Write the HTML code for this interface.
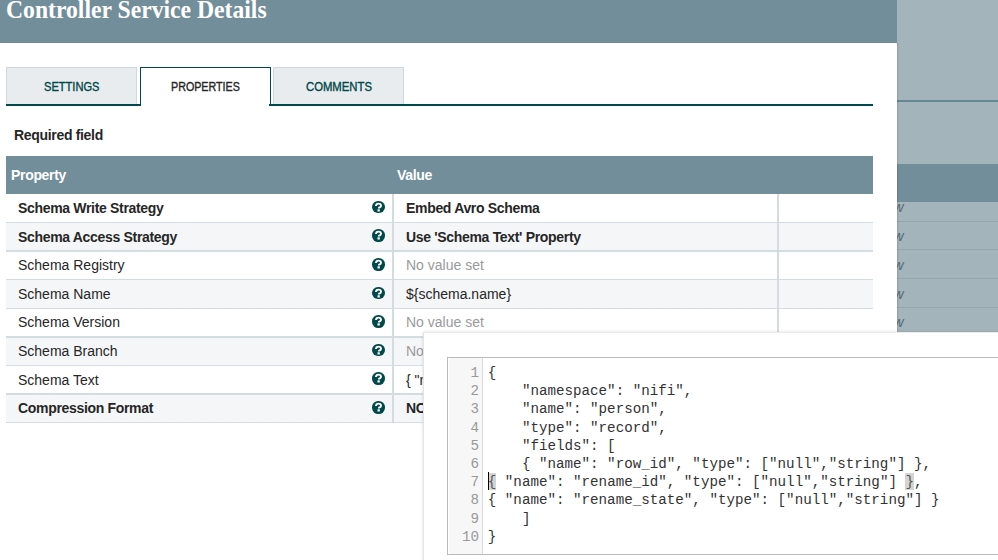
<!DOCTYPE html>
<html><head><meta charset="utf-8">
<style>
*{margin:0;padding:0;box-sizing:border-box}
html,body{width:998px;height:560px;overflow:hidden;background:#fff;font-family:"Liberation Sans",sans-serif}
.a{position:absolute}
.nw{white-space:nowrap}
#bgR{left:897px;top:0;width:101px;height:560px;background:#a3b4bb}
#bgline1{left:897px;top:100px;width:101px;height:1.5px;background:#648892}
#bgHead{left:897px;top:164px;width:101px;height:37.5px;background:#728e9b}
.bgrow{left:897px;width:101px;height:1.2px;background:#92a6ae}
.bgw{left:893.5px;font-size:14px;font-style:italic;color:#56676e;line-height:14px}
#hdr{left:0;top:0;width:897px;height:43px;background:#728e9b}
#modal{left:0;top:43px;width:897px;height:517px;background:#fff;box-shadow:1px 0 1.5px rgba(0,0,0,0.12)}
#title{left:6px;top:-5px;transform:scaleX(0.91);transform-origin:0 0;font-family:"Liberation Serif",serif;font-weight:bold;font-size:26px;line-height:30px;color:#fff}
.tab{top:67px;height:38px;background:#e8ecee;border:1px solid #cfd8dc;border-bottom:none}
.tab.sel{background:#fff;border:1.5px solid #004849;border-bottom:none}
.tt{top:81.9px;font-size:12px;line-height:10px;color:#004849;transform-origin:0 0;-webkit-text-stroke:0.35px currentColor}
#tabline{left:6px;top:104.4px;width:867px;height:1.4px;background:#004849}
.b{font-weight:bold;letter-spacing:-0.32px}
#req{left:14px;top:127px;font-size:14px;line-height:16px;color:#262626}
#thead{left:6px;top:156px;width:867px;height:38px;background:#728e9b}
.ht{top:167px;font-size:14px;line-height:16px;color:#fff}
.row{left:6px;width:867px;height:28.6px}
.row.alt{background:#f4f6f7}
.rl{left:6px;width:867px;height:1.5px;background:#d3dde1}
.vl{top:194px;width:1.6px;height:229px;background:#d3dde1}
.pt{left:18px;font-size:14px;line-height:16px;color:#262626}
.vt{left:406px;font-size:14px;line-height:16px;color:#262626}
.gray{color:#9a9a9a}
.hi{left:372px;width:12.6px;height:12.6px;border-radius:50%;background:#004849}
.hi svg{position:absolute;left:0;top:0}
#pop{left:423px;top:332px;width:600px;height:260px;background:#fff;box-shadow:0 0 3px rgba(0,0,0,0.14);border-left:1px solid #e4e4e4;border-top:1px solid #ececec}
#ed{left:447px;top:356.5px;width:600px;height:198.5px;border:1.5px solid #bababa;background:#fff}
#gut{left:448.5px;top:358px;width:34px;height:195.5px;background:#f7f7f7;border-right:1px solid #dddddd}
.code{font-family:"Liberation Mono",monospace;font-size:14.21px;line-height:18.2px;white-space:pre}
#nums{left:449px;top:364px;width:30px;text-align:right;color:#999}
#src{left:487.8px;top:364px;color:#333}
#cur{left:488.2px;top:472.2px;width:1.2px;height:17.6px;background:#000}
.mb{background:#d4d4d4;display:inline-block;height:17.6px;vertical-align:top;margin-top:-0.5px;color:#555}
</style></head><body>
<div class="a" id="bgR"></div>
<div class="a" id="bgline1"></div>
<div class="a" id="bgHead"></div>
<div class="a bgrow" style="top:220.5px"></div>
<div class="a bgrow" style="top:248.8px"></div>
<div class="a bgrow" style="top:277.8px"></div>
<div class="a bgrow" style="top:306.8px"></div>
<div class="a nw bgw" style="top:200.3px">w</div>
<div class="a nw bgw" style="top:229.3px">w</div>
<div class="a nw bgw" style="top:257.8px">w</div>
<div class="a nw bgw" style="top:286.8px">w</div>
<div class="a nw bgw" style="top:314.8px">w</div>
<div class="a" id="hdr"></div>
<div class="a" id="modal"></div>
<div class="a nw" id="title">Controller Service Details</div>

<div class="a tab" style="left:6px;width:131px"></div>
<div class="a tab sel" style="left:139.5px;width:131px;height:39px"></div>
<div class="a tab" style="left:273px;width:131px"></div>
<div class="a" id="tabline"></div>
<div class="a" style="left:141px;top:104px;width:128px;height:2px;background:#fff"></div>
<div class="a tt nw" style="left:43.5px;transform:scaleX(0.924)">SETTINGS</div>
<div class="a tt nw" style="left:170.5px;color:#262626;transform:scaleX(0.893)">PROPERTIES</div>
<div class="a tt nw" style="left:305.5px;transform:scaleX(0.942)">COMMENTS</div>

<div class="a nw b" id="req">Required field</div>

<div class="a" id="thead"></div>
<div class="a nw b ht" style="left:11px">Property</div>
<div class="a nw b ht" style="left:397px">Value</div>

<div class="a row" style="top:194px"></div>
<div class="a row alt" style="top:222.6px"></div>
<div class="a row" style="top:251.2px"></div>
<div class="a row alt" style="top:279.8px"></div>
<div class="a row" style="top:308.4px"></div>
<div class="a row alt" style="top:337px"></div>
<div class="a row" style="top:365.6px"></div>
<div class="a row alt" style="top:394.2px"></div>
<div class="a rl" style="top:221.7px"></div>
<div class="a rl" style="top:250.3px"></div>
<div class="a rl" style="top:278.9px"></div>
<div class="a rl" style="top:307.5px"></div>
<div class="a rl" style="top:336.1px"></div>
<div class="a rl" style="top:364.7px"></div>
<div class="a rl" style="top:393.3px"></div>
<div class="a rl" style="top:421.9px"></div>
<div class="a vl" style="left:392.3px"></div>
<div class="a vl" style="left:777.4px"></div>

<div class="a nw b pt" style="top:200px">Schema Write Strategy</div>
<div class="a nw b pt" style="top:228.6px">Schema Access Strategy</div>
<div class="a nw pt" style="top:257.2px">Schema Registry</div>
<div class="a nw pt" style="top:285.8px">Schema Name</div>
<div class="a nw pt" style="top:314.4px">Schema Version</div>
<div class="a nw pt" style="top:343px">Schema Branch</div>
<div class="a nw pt" style="top:371.6px">Schema Text</div>
<div class="a nw b pt" style="top:400.2px">Compression Format</div>

<div class="a nw b vt" style="top:200px">Embed Avro Schema</div>
<div class="a nw b vt" style="top:228.6px">Use 'Schema Text' Property</div>
<div class="a nw vt gray" style="top:257.2px">No value set</div>
<div class="a nw vt" style="top:285.8px">${schema.name}</div>
<div class="a nw vt gray" style="top:314.4px">No value set</div>
<div class="a nw vt gray" style="top:343px">No value set</div>
<div class="a nw vt" style="top:371.6px">{ "name": "person"</div>
<div class="a nw b vt" style="top:400.2px">NONE</div>

<div class="a hi" style="top:200.8px"><svg width="12.6" height="12.6" viewBox="0 0 12.6 12.6"><path d="M4.0 5.1 C4.0 3.4 5.0 2.6 6.4 2.6 C8.0 2.6 9.0 3.5 9.0 4.7 C9.0 5.9 7.9 6.2 7.3 6.6 C6.9 6.9 6.8 7.1 6.8 7.6" fill="none" stroke="#fff" stroke-width="1.9" stroke-linecap="butt"/><rect x="5.5" y="8.3" width="2.3" height="2.2" fill="#fff"/></svg></div>
<div class="a hi" style="top:229.4px"><svg width="12.6" height="12.6" viewBox="0 0 12.6 12.6"><path d="M4.0 5.1 C4.0 3.4 5.0 2.6 6.4 2.6 C8.0 2.6 9.0 3.5 9.0 4.7 C9.0 5.9 7.9 6.2 7.3 6.6 C6.9 6.9 6.8 7.1 6.8 7.6" fill="none" stroke="#fff" stroke-width="1.9" stroke-linecap="butt"/><rect x="5.5" y="8.3" width="2.3" height="2.2" fill="#fff"/></svg></div>
<div class="a hi" style="top:258.0px"><svg width="12.6" height="12.6" viewBox="0 0 12.6 12.6"><path d="M4.0 5.1 C4.0 3.4 5.0 2.6 6.4 2.6 C8.0 2.6 9.0 3.5 9.0 4.7 C9.0 5.9 7.9 6.2 7.3 6.6 C6.9 6.9 6.8 7.1 6.8 7.6" fill="none" stroke="#fff" stroke-width="1.9" stroke-linecap="butt"/><rect x="5.5" y="8.3" width="2.3" height="2.2" fill="#fff"/></svg></div>
<div class="a hi" style="top:286.6px"><svg width="12.6" height="12.6" viewBox="0 0 12.6 12.6"><path d="M4.0 5.1 C4.0 3.4 5.0 2.6 6.4 2.6 C8.0 2.6 9.0 3.5 9.0 4.7 C9.0 5.9 7.9 6.2 7.3 6.6 C6.9 6.9 6.8 7.1 6.8 7.6" fill="none" stroke="#fff" stroke-width="1.9" stroke-linecap="butt"/><rect x="5.5" y="8.3" width="2.3" height="2.2" fill="#fff"/></svg></div>
<div class="a hi" style="top:315.2px"><svg width="12.6" height="12.6" viewBox="0 0 12.6 12.6"><path d="M4.0 5.1 C4.0 3.4 5.0 2.6 6.4 2.6 C8.0 2.6 9.0 3.5 9.0 4.7 C9.0 5.9 7.9 6.2 7.3 6.6 C6.9 6.9 6.8 7.1 6.8 7.6" fill="none" stroke="#fff" stroke-width="1.9" stroke-linecap="butt"/><rect x="5.5" y="8.3" width="2.3" height="2.2" fill="#fff"/></svg></div>
<div class="a hi" style="top:343.8px"><svg width="12.6" height="12.6" viewBox="0 0 12.6 12.6"><path d="M4.0 5.1 C4.0 3.4 5.0 2.6 6.4 2.6 C8.0 2.6 9.0 3.5 9.0 4.7 C9.0 5.9 7.9 6.2 7.3 6.6 C6.9 6.9 6.8 7.1 6.8 7.6" fill="none" stroke="#fff" stroke-width="1.9" stroke-linecap="butt"/><rect x="5.5" y="8.3" width="2.3" height="2.2" fill="#fff"/></svg></div>
<div class="a hi" style="top:372.4px"><svg width="12.6" height="12.6" viewBox="0 0 12.6 12.6"><path d="M4.0 5.1 C4.0 3.4 5.0 2.6 6.4 2.6 C8.0 2.6 9.0 3.5 9.0 4.7 C9.0 5.9 7.9 6.2 7.3 6.6 C6.9 6.9 6.8 7.1 6.8 7.6" fill="none" stroke="#fff" stroke-width="1.9" stroke-linecap="butt"/><rect x="5.5" y="8.3" width="2.3" height="2.2" fill="#fff"/></svg></div>
<div class="a hi" style="top:401.0px"><svg width="12.6" height="12.6" viewBox="0 0 12.6 12.6"><path d="M4.0 5.1 C4.0 3.4 5.0 2.6 6.4 2.6 C8.0 2.6 9.0 3.5 9.0 4.7 C9.0 5.9 7.9 6.2 7.3 6.6 C6.9 6.9 6.8 7.1 6.8 7.6" fill="none" stroke="#fff" stroke-width="1.9" stroke-linecap="butt"/><rect x="5.5" y="8.3" width="2.3" height="2.2" fill="#fff"/></svg></div>
<div class="a" id="pop"></div>
<div class="a" id="ed"></div>
<div class="a" id="gut"></div>
<div class="a code" id="nums">1
2
3
4
5
6
7
8
9
10</div>
<div class="a code" id="src">{
    "namespace": "nifi",
    "name": "person",
    "type": "record",
    "fields": [
    { "name": "row_id", "type": ["null","string"] },
<span class="mb">{</span> "name": "rename_id", "type": ["null","string"] <span class="mb">}</span>,
{ "name": "rename_state", "type": ["null","string"] }
    ]
}</div>
<div class="a" id="cur"></div>
</body></html>
